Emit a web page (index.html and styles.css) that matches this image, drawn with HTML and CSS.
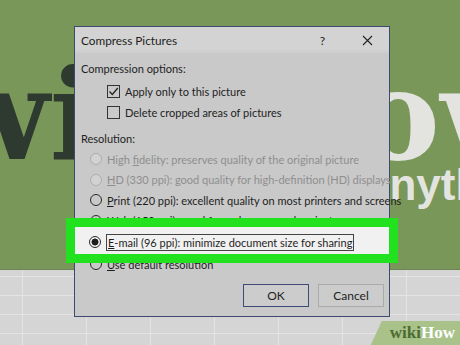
FILE: index.html
```html
<!DOCTYPE html>
<html lang="en">
<head>
  <meta charset="UTF-8">
  <title>Compress Pictures</title>
  <link rel="stylesheet" href="styles.css">
</head>
<body>
  <div class="scene">
    <div class="backdrop">
      <div class="big big-left">wi</div>
      <div class="big big-right">ow</div>
      <div class="sub-right">anything</div>
    </div>
    <div class="sheet"></div>

    <div class="dialog">
      <div class="titlebar">
        <span class="title">Compress Pictures</span>
        <span class="help">?</span>
        <svg class="close" width="11" height="11" viewBox="0 0 11 11">
          <path d="M1 1L10 10M10 1L1 10" stroke="#222" stroke-width="1.1" fill="none"/>
        </svg>
      </div>

      <div class="body">
        <div class="label">Compression options:</div>
        <div class="checks">
          <div class="check-row">
            <span class="checkbox">
              <svg width="11" height="11" viewBox="0 0 11 11"><path d="M1.5 5.5L4.3 8.5L9.8 2" stroke="#222" stroke-width="1.3" fill="none"/></svg>
            </span>
            <span>Apply only to this picture</span>
          </div>
          <div class="check-row">
            <span class="checkbox"></span>
            <span>Delete cropped areas of pictures</span>
          </div>
        </div>

        <div class="label">Resolution:</div>
        <div class="radio-row disabled"><span class="radio"></span><span>High <u>f</u>idelity: preserves quality of the original picture</span></div>
        <div class="radio-row disabled"><span class="radio"></span><span><u>H</u>D (330 ppi): good quality for high-definition (HD) displays</span></div>
        <div class="radio-row"><span class="radio"></span><span><u>P</u>rint (220 ppi): excellent quality on most printers and screens</span></div>
        <div class="radio-row"><span class="radio"></span><span><u>W</u>eb (150 ppi): good for web pages and projectors</span></div>
        <div class="radio-row highlight"><span class="radio checked"></span><span class="focus"><u>E</u>-mail (96 ppi): minimize document size for sharing</span></div>
        <div class="radio-row"><span class="radio"></span><span><u>U</u>se default resolution</span></div>
      </div>

      <div class="footer">
        <button class="btn btn-default">OK</button>
        <button class="btn">Cancel</button>
      </div>
    </div>

    <div class="logo"><span class="logo-wiki">wiki</span><span class="logo-how">How</span></div>
  </div>
</body>
</html>
```

FILE: styles.css
```css
* {
  margin: 0;
  padding: 0;
  box-sizing: border-box;
}

body {
  font-family: 'Lato', 'Open Sans', sans-serif;
  background: #d4d4d4;
}

.scene {
  position: relative;
  width: 460px;
  height: 345px;
  overflow: hidden;
}

.backdrop {
  position: relative;
  height: 270px;
  background: #799759;
  border-bottom: 1px solid #6d8454;
  overflow: hidden;
}

.big {
  position: absolute;
  font-family: 'DejaVu Serif', serif;
  font-weight: 700;
  font-size: 126px;
  line-height: 1;
}

.big-left {
  left: -59px;
  top: 52px;
  color: #2e3a2f;
}

.big-right {
  left: 356px;
  top: 52px;
  color: #e3e4df;
}

.sub-right {
  position: absolute;
  left: 365px;
  top: 160px;
  font-family: 'Liberation Sans', sans-serif;
  font-weight: 700;
  font-size: 44px;
  color: #e3e4df;
}

.sheet {
  height: 75px;
  background-color: #d5d5d5;
  background-image:
    linear-gradient(to right, #e4e4e4 1px, transparent 1px),
    linear-gradient(to bottom, #e4e4e4 1px, transparent 1px);
  background-size: 64px 100%, 100% 19px;
  background-position: 22px 0, 0 6px;
}

/* dialog */
.dialog {
  position: absolute;
  left: 74px;
  top: 26px;
  width: 316px;
  height: 291px;
  background: #c9c9c9;
  border: 1px solid #3d4a70;
  display: flex;
  flex-direction: column;
  font-size: 11px;
  color: #1e1e1e;
}

.titlebar {
  height: 26px;
  background: linear-gradient(#d3d3d3 85%, #cdcdcd);
  display: flex;
  align-items: center;
  padding-left: 6px;
  font-size: 11.8px;
}

.title {
  flex: 1;
}

.help {
  margin-right: 37px;
  font-size: 12px;
}

.close {
  margin-right: 16px;
}

.label {
  height: 20px;
  line-height: 20px;
  padding-left: 6px;
  margin-top: 6px;
}

.checks {
  margin-top: 2px;
}

.check-row {
  height: 21px;
  display: flex;
  align-items: center;
  gap: 5px;
  padding-left: 32px;
}

.checkbox {
  width: 13px;
  height: 13px;
  border: 1px solid #333;
  display: flex;
  align-items: center;
  justify-content: center;
}

.radio-row {
  height: 20.5px;
  display: flex;
  align-items: center;
  gap: 5px;
  padding-left: 15px;
  white-space: nowrap;
}

.radio {
  width: 12px;
  height: 12px;
  border: 1px solid #2a2a2a;
  border-radius: 50%;
  flex-shrink: 0;
}

.radio-row.disabled {
  color: #8e8e8e;
}

.radio-row.disabled .radio {
  border-color: #adadad;
  background: #d2d2d2;
}

.radio.checked {
  background: radial-gradient(circle, #1e1e1e 3.2px, transparent 3.8px);
}

.radio-row.highlight {
  position: relative;
  z-index: 1;
  height: 27px;
  margin-top: -4px;
  padding-top: 3px;
  padding-left: 14px;
  background: #f1f1f1;
  box-shadow: 0 0 0 9px #22e11e;
}

.focus {
  border: 1px solid #444;
  padding: 0 1px;
  line-height: 15px;
}

.footer {
  margin-top: auto;
  display: flex;
  justify-content: flex-end;
  gap: 9px;
  padding: 0 5px 9px 0;
}

.btn {
  width: 66px;
  height: 23px;
  background: #cccccc;
  border: 1px solid #aaaaaa;
  font-family: inherit;
  font-size: 12px;
  color: #1e1e1e;
}

.btn-default {
  border-color: #3d4a78;
}

/* wikiHow mark */
.logo {
  position: absolute;
  right: 0;
  bottom: -2px;
  padding: 2px 5px 4px 20px;
  background: #a8c28a;
  border-top-left-radius: 6px;
  clip-path: polygon(12px 0, 100% 0, 100% 100%, 0 100%);
  font-family: 'Liberation Serif', serif;
  font-weight: 700;
  font-size: 17px;
}

.logo-wiki {
  color: #4d6c33;
}

.logo-how {
  color: #ffffff;
}
```
